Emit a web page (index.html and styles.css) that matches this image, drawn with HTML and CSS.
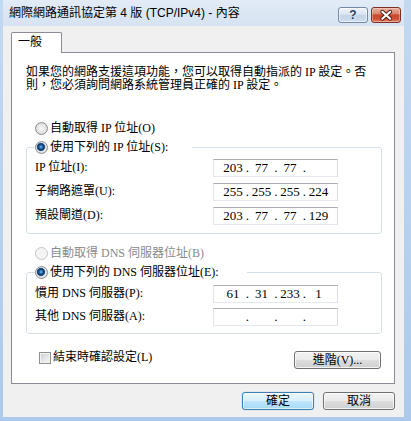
FILE: index.html
```html
<!DOCTYPE html>
<html lang="zh-Hant">
<head>
<meta charset="utf-8">
<title>網際網路通訊協定第 4 版 (TCP/IPv4) - 內容</title>
<link rel="stylesheet" href="styles.css">
</head>
<body>
<div class="window">
  <div class="titlebar">
    <span class="title">網際網路通訊協定第 4 版 (TCP/IPv4) - 內容</span>
    <div class="caps">
      <span class="cap help">?</span>
      <span class="cap close">
        <svg width="30" height="16" viewBox="0 0 30 16">
          <path d="M11 4.5 L19.5 12 M19.5 4.5 L11 12" stroke="#4b1f16" stroke-width="4.2" stroke-linecap="round" fill="none"/>
          <path d="M11 4.5 L19.5 12 M19.5 4.5 L11 12" stroke="#ffffff" stroke-width="2.2" stroke-linecap="round" fill="none"/>
        </svg>
      </span>
    </div>
  </div>
  <div class="client">
    <div class="tabs"><span class="tab">一般</span></div>
    <div class="panel">
      <p class="intro">如果您的網路支援這項功能，您可以取得自動指派的 IP 設定。否<br>則，您必須詢問網路系統管理員正確的 IP 設定。</p>
      <div class="opt first"><span class="radio"></span><span>自動取得 IP 位址(O)</span></div>
      <fieldset class="group g1">
        <legend class="legend l1"><span class="opt"><span class="radio on"></span><span>使用下列的 IP 位址(S):</span></span></legend>
        <div class="rows">
          <span class="lbl">IP 位址(I):</span>
          <span class="ipbox"><span class="seg">203</span><span class="dot">.</span><span class="seg">77</span><span class="dot">.</span><span class="seg">77</span><span class="dot">.</span><span class="seg"></span></span>
          <span class="lbl">子網路遮罩(U):</span>
          <span class="ipbox"><span class="seg">255</span><span class="dot">.</span><span class="seg">255</span><span class="dot">.</span><span class="seg">255</span><span class="dot">.</span><span class="seg">224</span></span>
          <span class="lbl">預設閘道(D):</span>
          <span class="ipbox"><span class="seg">203</span><span class="dot">.</span><span class="seg">77</span><span class="dot">.</span><span class="seg">77</span><span class="dot">.</span><span class="seg">129</span></span>
        </div>
      </fieldset>
      <div class="opt dns-auto disabled"><span class="radio off"></span><span>自動取得 DNS 伺服器位址(B)</span></div>
      <fieldset class="group g2">
        <legend class="legend l2"><span class="opt"><span class="radio on"></span><span>使用下列的 DNS 伺服器位址(E):</span></span></legend>
        <div class="rows dns">
          <span class="lbl">慣用 DNS 伺服器(P):</span>
          <span class="ipbox"><span class="seg">61</span><span class="dot">.</span><span class="seg">31</span><span class="dot">.</span><span class="seg">233</span><span class="dot">.</span><span class="seg">1</span></span>
          <span class="lbl">其他 DNS 伺服器(A):</span>
          <span class="ipbox"><span class="seg"></span><span class="dot">.</span><span class="seg"></span><span class="dot">.</span><span class="seg"></span><span class="dot">.</span><span class="seg"></span></span>
        </div>
      </fieldset>
      <div class="footer">
        <span class="check"><span class="box"></span><span>結束時確認設定(L)</span></span>
        <button class="btn adv">進階(V)...</button>
      </div>
    </div>
    <div class="actions">
      <button class="btn default">確定</button>
      <button class="btn">取消</button>
    </div>
  </div>
</div>
</body>
</html>
```
FILE: styles.css
```css
* { box-sizing: border-box; }
html, body { margin: 0; padding: 0; }
body {
  width: 411px;
  height: 421px;
  overflow: hidden;
  font-family: "Liberation Serif", "Noto Sans CJK TC", serif;
  font-size: 12px;
  color: #000;
  background: #fff;
}
.window {
  height: 421px;
  display: flex;
  flex-direction: column;
  background: linear-gradient(180deg, #c3d9f1 0%, #acc9ec 100%);
}
.titlebar {
  height: 26px;
  flex: none;
  margin: 0 7px 0 3px;
  padding: 0 3px 0 6px;
  display: flex;
  justify-content: space-between;
  align-items: flex-start;
  background: linear-gradient(180deg, #e2ebf6 0%, #d6e3f2 100%);
}
.title {
  font-family: "Liberation Sans", "Noto Sans CJK TC", sans-serif;
  font-size: 12px;
  line-height: 15px;
  margin-top: 6px;
  white-space: nowrap;
}
.caps { display: flex; gap: 3px; margin-top: 7px; }
.cap {
  width: 30px;
  height: 16px;
  border-radius: 3px;
  display: flex;
  align-items: center;
  justify-content: center;
}
.help {
  border: 1px solid #7688a3;
  background: linear-gradient(180deg, #eef3f9 0%, #dae5f1 45%, #c4d5e9 50%, #cddcee 100%);
  box-shadow: inset 0 0 0 1px rgba(255,255,255,.6);
  font-family: "Liberation Sans", sans-serif;
  font-weight: bold;
  font-size: 12px;
  color: #2b3f5e;
  text-shadow: 0 0 2px #fff;
  line-height: 14px;
}
.close {
  border: 1px solid #7a3122;
  background: linear-gradient(180deg, #eab0a2 0%, #dc8670 40%, #c9472d 50%, #cf5236 80%, #e08a72 100%);
  box-shadow: inset 0 0 0 1px rgba(255,220,210,.45);
}
.close svg { display: block; }
.client {
  flex: 1;
  margin: 0 7px 4px 3px;
  background: #f0f0f0;
  padding: 6px 9px 0 8px;
  display: flex;
  flex-direction: column;
}
.tabs {
  display: flex;
  position: relative;
  z-index: 1;
  margin-bottom: -1px;
}
.tab {
  width: 51px;
  height: 21px;
  border: 1px solid #898c95;
  border-bottom: none;
  border-radius: 2px 2px 0 0;
  background: #fff;
  padding-left: 6px;
  line-height: 19px;
}
.panel {
  border: 1px solid #898c95;
  background: #fff;
  padding: 13px 12px 14px 14px;
}
.intro {
  margin: 0;
  line-height: 13px;
  white-space: nowrap;
}
.opt {
  display: flex;
  align-items: center;
  height: 14px;
  line-height: 14px;
  white-space: nowrap;
}
.opt.first { margin: 29px 0 0 9px; }
.opt.dns-auto { margin: 12px 0 0 9px; }
.disabled { color: #8a8a8a; }
.radio {
  flex: none;
  width: 13px;
  height: 13px;
  border-radius: 50%;
  border: 1px solid #8e8f8f;
  background: radial-gradient(circle at 50% 50%, #f6f6f6 0, #f0f0f0 2px, #d8d8d8 6px);
  margin-right: 2px;
}
.radio.on {
  background: radial-gradient(circle at 45% 45%, #7ec3f2 0, #2a6fb6 1.6px, #0f3660 3px, #1d4f86 3.7px, #cfd6de 4.4px, #f0f0f0 5.2px, #d6d6d6 6px);
}
.radio.off {
  border-color: #c5c5c5;
  background: #f4f4f4;
}
.group {
  margin: 5px 0 0;
  min-width: 0;
  border: 1px solid #d5dfe5;
  border-radius: 3px;
}
.g1 { padding: 5px 0 8px 8px; }
.g2 { padding: 6px 0 7px 8px; }
.legend { padding: 0; }
.l1 { width: 157px; }
.l2 { width: 212px; }
.rows {
  display: grid;
  grid-template-columns: 178px 125px;
  row-gap: 6px;
}
.rows.dns { row-gap: 5px; }
.lbl {
  height: 18px;
  line-height: 16px;
  white-space: nowrap;
}
.ipbox {
  height: 18px;
  border: 1px solid;
  border-color: #abadb3 #dbdfe6 #e3e9ef #e2e3ea;
  background: #fff;
  display: flex;
  padding-left: 8px;
  font-size: 13px;
  line-height: 16px;
}
.seg { width: 22px; text-align: center; }
.dot { width: 6.5px; text-align: center; }
.footer {
  display: flex;
  justify-content: space-between;
  align-items: flex-start;
  margin-top: 17px;
  padding: 0 1px 0 13px;
}
.check {
  display: flex;
  align-items: center;
  line-height: 13px;
}
.box {
  width: 12px;
  height: 12px;
  border: 1px solid #8e8f8f;
  background: linear-gradient(135deg, #c9cdd3 0%, #e6e8eb 60%, #f6f6f6 100%);
  box-shadow: inset 0 0 0 1px #f3f3f3;
  margin-right: 2px;
}
.btn {
  width: 72px;
  height: 18px;
  padding: 0;
  border: 1px solid #707070;
  border-radius: 3px;
  background: linear-gradient(180deg, #f2f2f2 0%, #ebebeb 48%, #dddddd 52%, #cfcfcf 100%);
  box-shadow: inset 0 0 0 1px rgba(255,255,255,.75);
  font: inherit;
  line-height: 16px;
  color: #000;
}
.btn.adv { width: 87px; }
.btn.default {
  border-color: #3c7fb1;
  background: linear-gradient(180deg, #eaf6fd 0%, #d9f0fc 48%, #bee6fd 52%, #a7d9f5 100%);
  box-shadow: inset 0 0 0 1px rgba(255,255,255,.6), 0 0 1px #5aa7dc;
}
.actions {
  display: flex;
  justify-content: flex-end;
  gap: 9px;
  margin-top: 8px;
}
```
